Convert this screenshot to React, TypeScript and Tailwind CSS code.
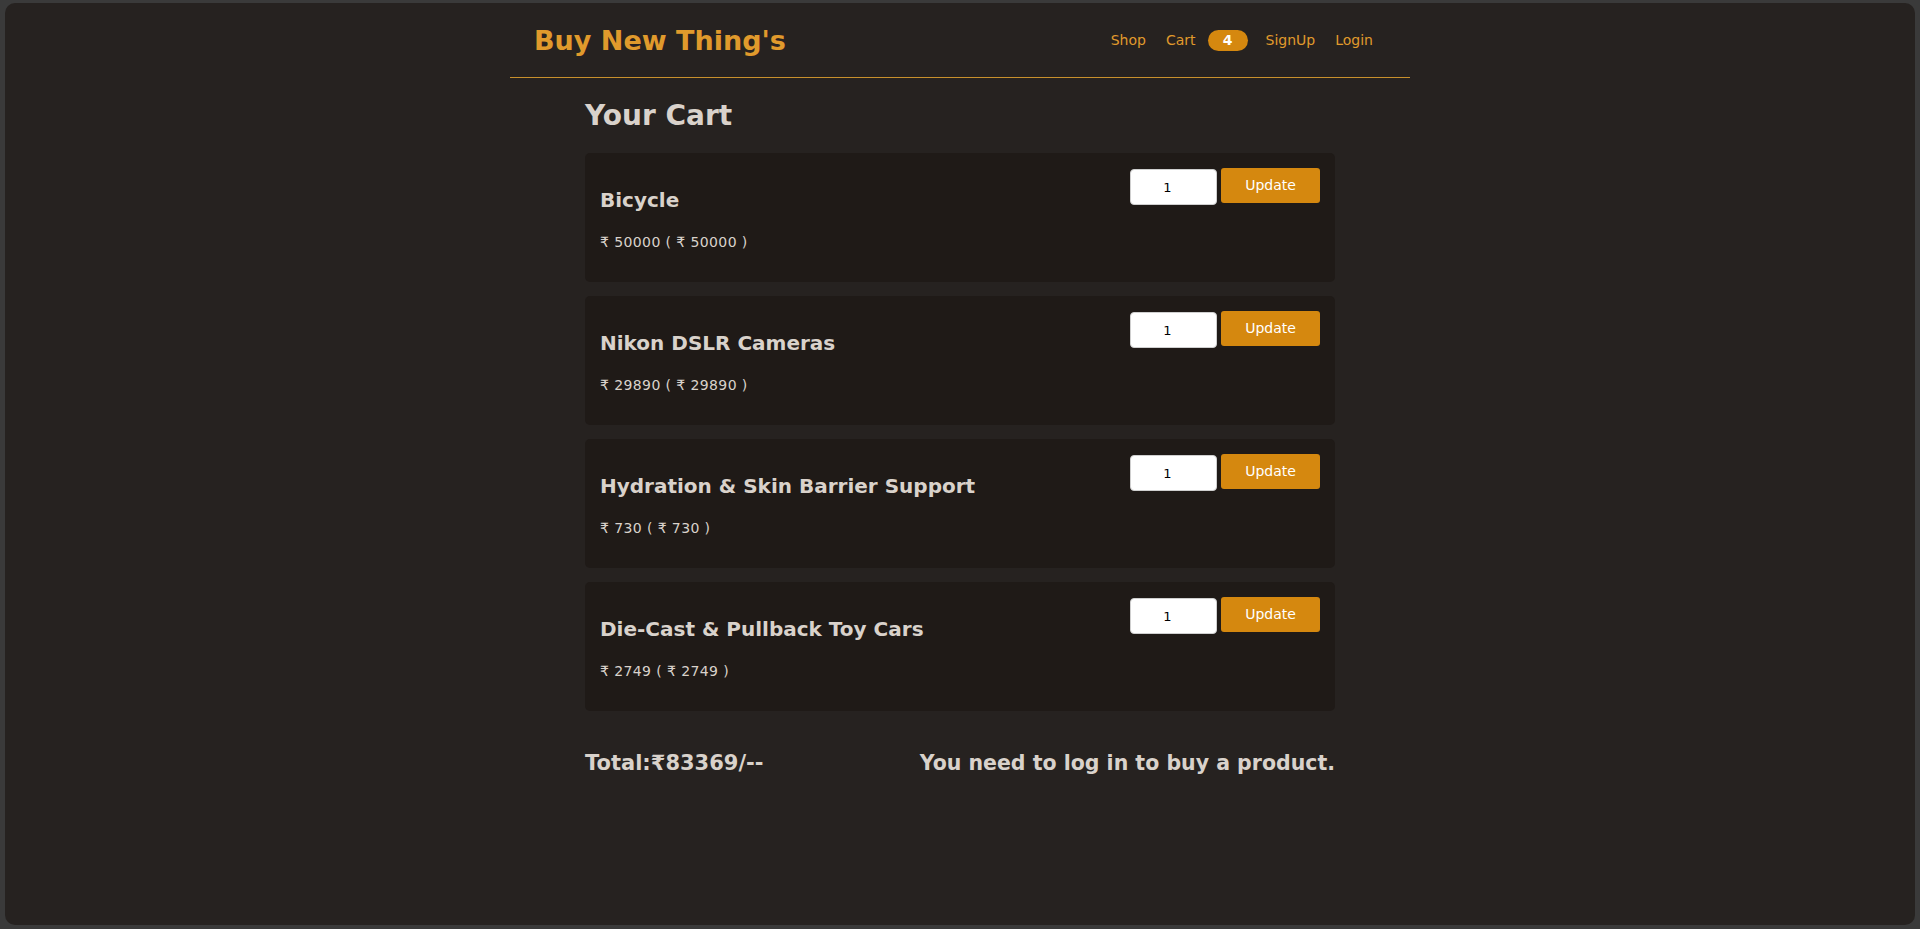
import { useState } from 'react';

type CartItem = {
    id: number;
    name: string;
    price: number;
    qty: number;
};

const initialItems: CartItem[] = [
    { id: 1, name: 'Bicycle', price: 50000, qty: 1 },
    { id: 2, name: 'Nikon DSLR Cameras', price: 29890, qty: 1 },
    { id: 3, name: 'Hydration & Skin Barrier Support', price: 730, qty: 1 },
    { id: 4, name: 'Die-Cast & Pullback Toy Cars', price: 2749, qty: 1 },
];

function Header({ count }: { count: number }) {
    return (
        <header className="w-[900px] mx-auto h-[75px] border-b border-[#c8902c] flex items-center justify-between pl-[24px] pr-[37px]">
            <a href="#" className="text-[27px] font-bold text-[#e09a2c] leading-none pt-[1px]">Buy New Thing's</a>
            <nav className="flex items-center text-[14px] text-[#e09a2c]">
                <a href="#" className="mr-[20px]">Shop</a>
                <a href="#" className="mr-[12px]">Cart</a>
                <span className="mr-[18px] w-[40px] h-[21px] rounded-full bg-[#d5880f] text-white font-bold flex items-center justify-center">{count}</span>
                <a href="#" className="mr-[20px]">SignUp</a>
                <a href="#">Login</a>
            </nav>
        </header>
    );
}

function CartRow({ item }: { item: CartItem }) {
    const [qty, setQty] = useState(String(item.qty));
    return (
        <div className="bg-[#1f1a17] rounded-[5px] flex justify-between px-[15px] pt-[15px] pb-[31px]">
            <div className="pt-[20px]">
                <h3 className="text-[20px] leading-[24px] font-bold text-[#d9d2cb]">{item.name}</h3>
                <p className="mt-[22px] text-[14px] leading-[17px] tracking-[0.4px] text-[#d9d2cb]">
                    ₹ {item.price} ( ₹ {item.price * item.qty} )
                </p>
            </div>
            <div className="flex items-start gap-[4px]">
                <input
                    value={qty}
                    onChange={(e) => setQty(e.target.value)}
                    className="mt-[1px] w-[87px] h-[36px] rounded-[4px] bg-white text-black text-[13px] text-center pr-[12px] outline-none border border-[#cfcfcf]"
                />
                <button className="w-[99px] h-[35px] rounded-[3px] bg-[#d5880f] text-white text-[14px]">Update</button>
            </div>
        </div>
    );
}

export default function App() {
    const [items] = useState(initialItems);
    const total = items.reduce((s, i) => s + i.price * i.qty, 0);

    return (
        <div className="w-full h-[929px] bg-[#3a3a3a] pt-[3px] pb-[4px] px-[5px]" style={{ fontFamily: '"DejaVu Sans", Verdana, sans-serif' }}>
            <div className="h-full rounded-[10px] bg-[#262220] overflow-hidden">
                <Header count={items.length} />

                <main className="w-[750px] mx-auto">
                    <h2 className="pt-[21px] text-[28px] leading-[34px] font-bold text-[#d9d2cb]">Your Cart</h2>

                    <div className="mt-[20px] flex flex-col gap-[14px]">
                        {items.map((item) => (
                            <CartRow key={item.id} item={item} />
                        ))}
                    </div>

                    <div className="mt-[39px] flex items-center justify-between font-bold text-[#d9d2cb]">
                        <span className="text-[21px] leading-[26px]">Total:₹{total}/--</span>
                        <span className="text-[20.5px] leading-[26px]">You need to log in to buy a product.</span>
                    </div>
                </main>
            </div>
        </div>
    );
}
